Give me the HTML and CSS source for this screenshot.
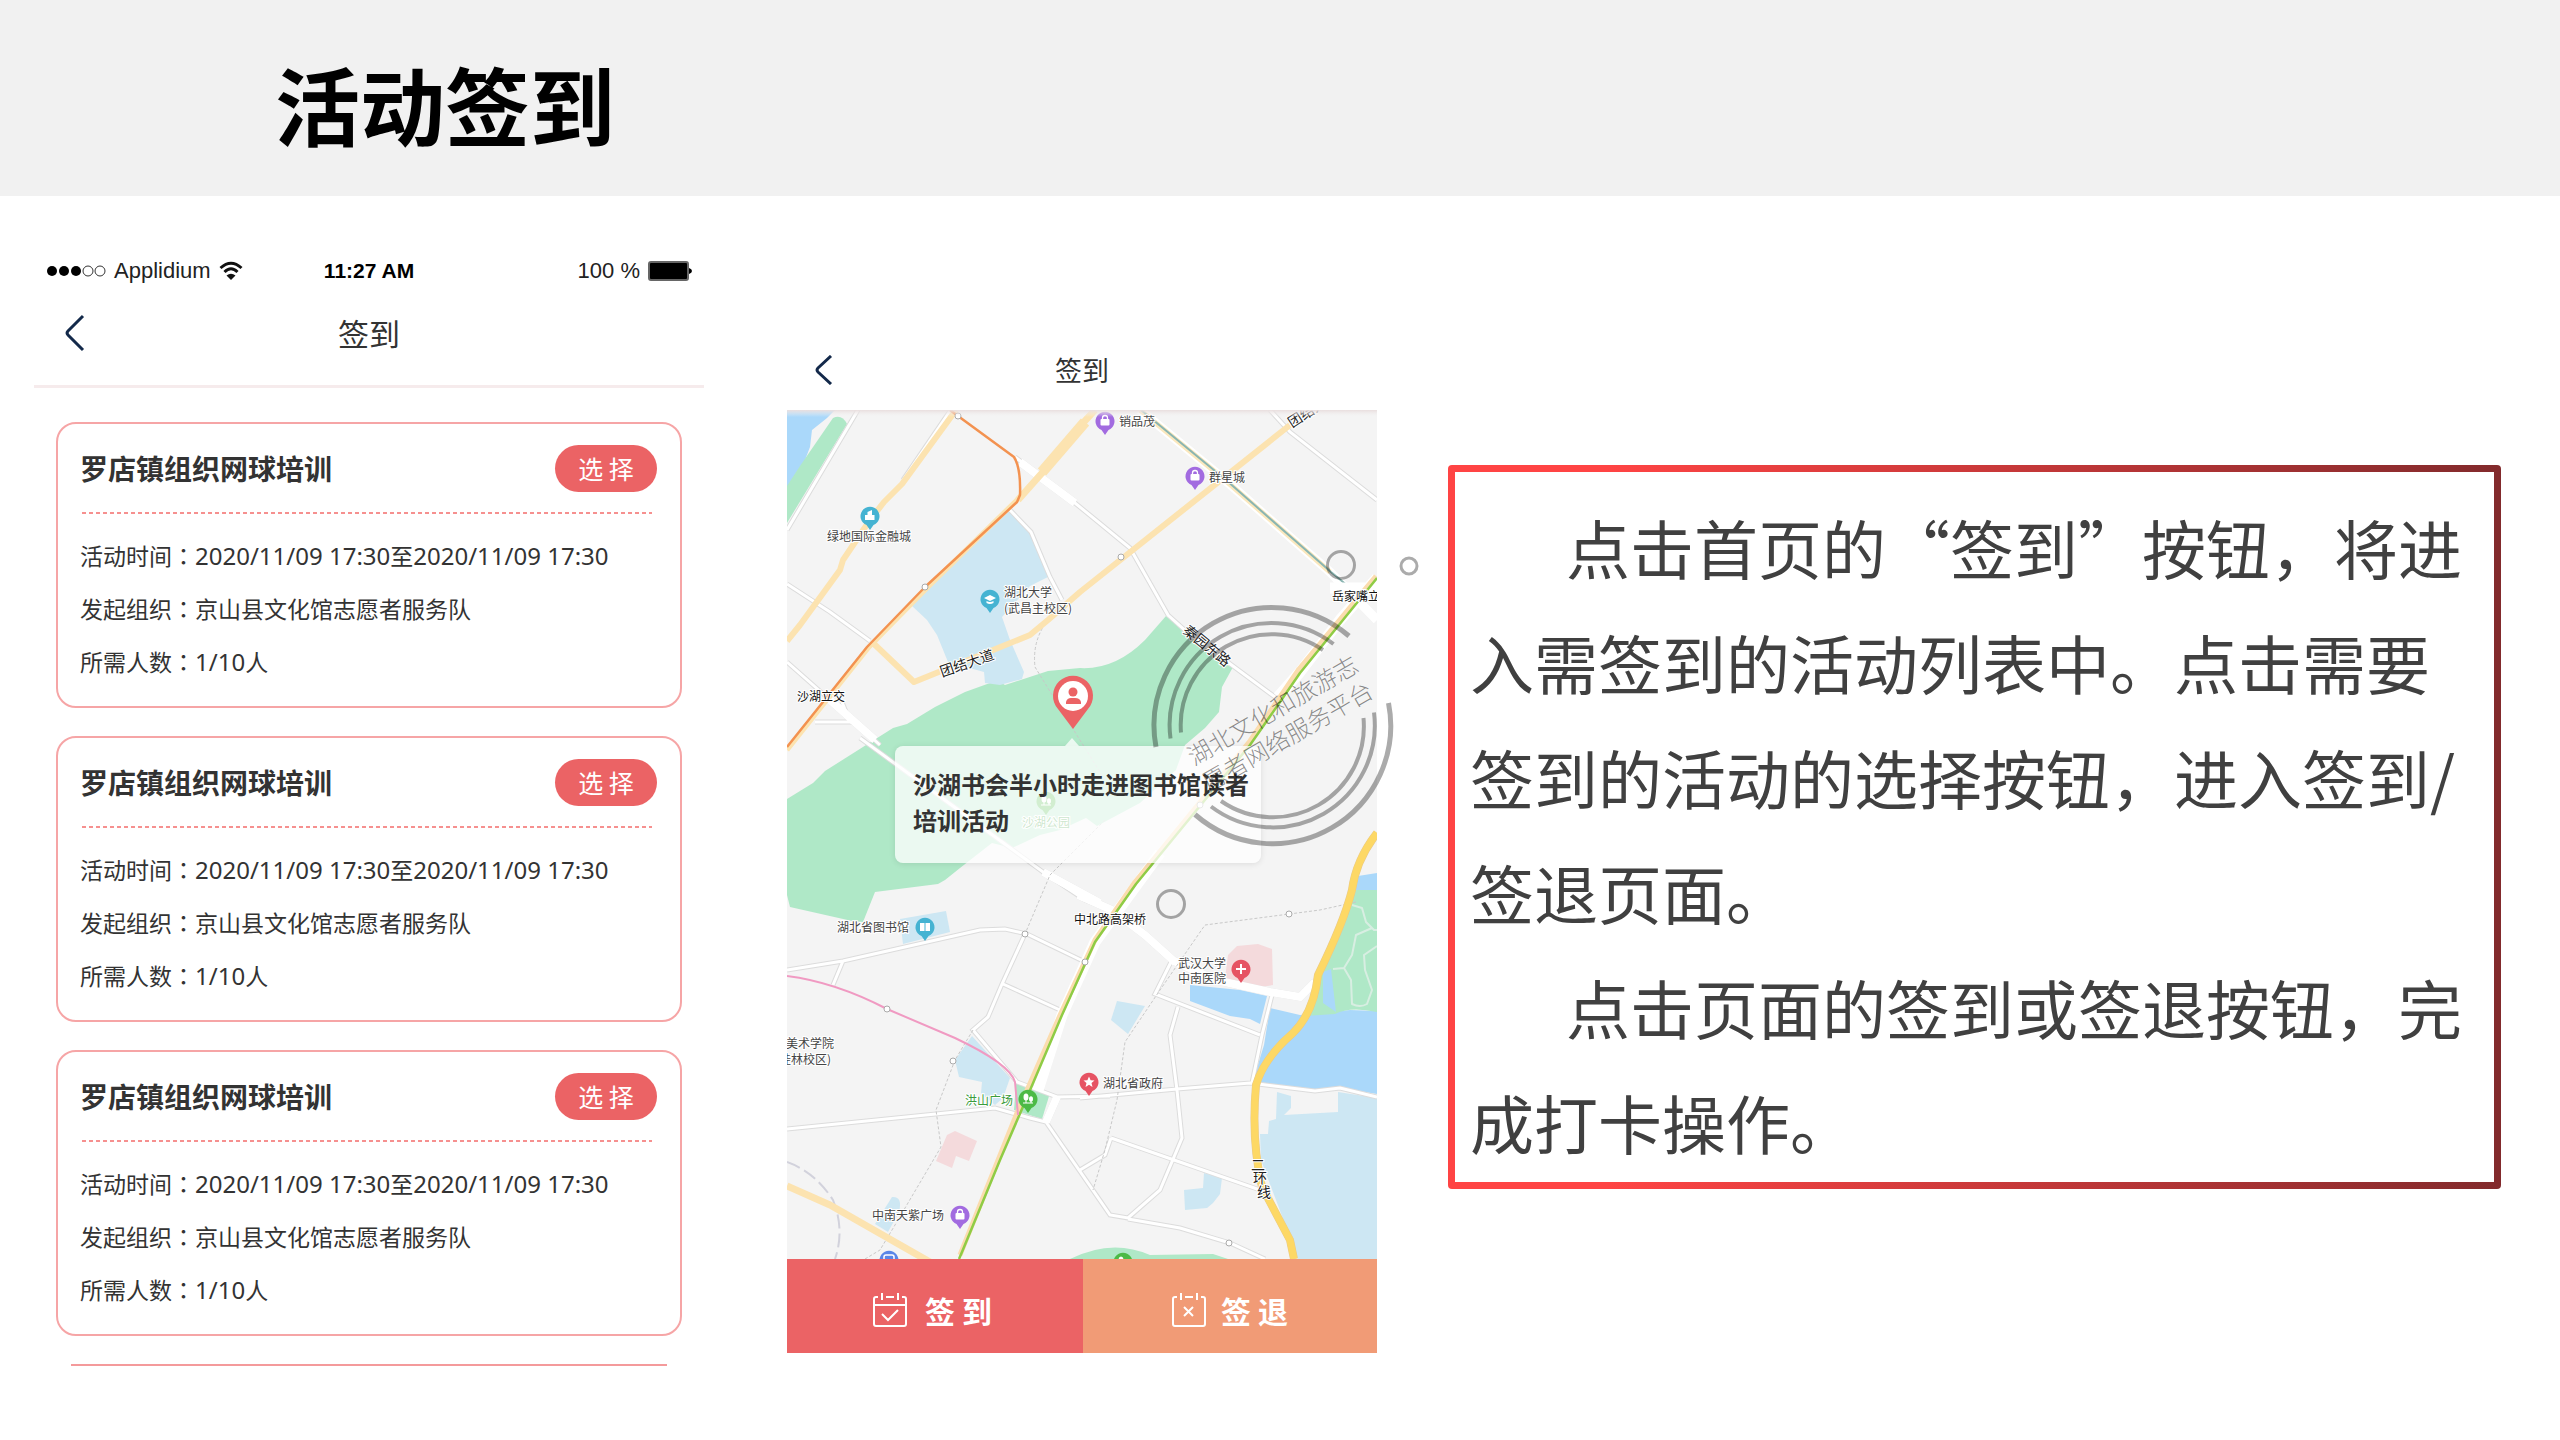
FILE: index.html
```html
<!DOCTYPE html>
<html lang="zh-CN">
<head>
	<meta charset="UTF-8">
	<title>活动签到</title>
	<link rel="stylesheet" href="styles.css">
</head>
<body>
	<header class="page-header">
		<h1>活动签到</h1>
	</header>
	<main class="content">
		<section class="phone-list">
			<div class="status-bar">
				<div class="carrier">
					<svg width="60" height="14" viewBox="0 0 60 14">
						<circle cx="6" cy="7" r="5"/><circle cx="18" cy="7" r="5"/><circle cx="30" cy="7" r="5"/>
						<g fill="none" stroke="#333"><circle cx="42" cy="7" r="5"/><circle cx="54" cy="7" r="5"/></g>
					</svg>
					<span>Applidium</span>
					<svg width="24" height="20" viewBox="0 0 24 20" fill="none" stroke="#111" stroke-width="3">
						<path d="M1.500 7 Q12 -2.500 22.500 7"/><path d="M5.500 11 Q12 4.500 18.500 11"/>
						<path d="M12 19 L7.500 14.500 Q12 11 16.500 14.500 Z" fill="#111" stroke="none"/>
					</svg>
				</div>
				<div class="time">11:27 AM</div>
				<div class="battery">
					<span>100 %</span>
					<svg width="44" height="20" viewBox="0 0 44 20">
						<rect x="1" y="1" width="39" height="18" rx="2" fill="#000" stroke="#666" stroke-width="2"/>
						<path d="M41 7 Q44 8 44 10 Q44 12 41 13 Z"/>
					</svg>
				</div>
			</div>
			<div class="nav-bar">
				<button type="button" class="back" aria-label="返回">
					<svg width="20" height="38" viewBox="0 0 20 38"><path d="M18 2 L3 17 Q1 19 3 21 L18 36"/></svg>
				</button>
				<h2>签到</h2>
			</div>
			<div class="list">
				<article class="card">
					<div class="card-head">
						<h3>罗店镇组织网球培训</h3>
						<button type="button" class="select">选 择</button>
					</div>
					<div class="card-info">
						<p>活动时间<span class="colon" lang="zh-TW">：</span><span class="num">2020/11/09 17:30</span>至<span class="num">2020/11/09 17:30</span></p>
						<p>发起组织<span class="colon" lang="zh-TW">：</span>京山县文化馆志愿者服务队</p>
						<p>所需人数<span class="colon" lang="zh-TW">：</span><span class="num">1/10</span>人</p>
					</div>
				</article>
				<article class="card">
					<div class="card-head">
						<h3>罗店镇组织网球培训</h3>
						<button type="button" class="select">选 择</button>
					</div>
					<div class="card-info">
						<p>活动时间<span class="colon" lang="zh-TW">：</span><span class="num">2020/11/09 17:30</span>至<span class="num">2020/11/09 17:30</span></p>
						<p>发起组织<span class="colon" lang="zh-TW">：</span>京山县文化馆志愿者服务队</p>
						<p>所需人数<span class="colon" lang="zh-TW">：</span><span class="num">1/10</span>人</p>
					</div>
				</article>
				<article class="card">
					<div class="card-head">
						<h3>罗店镇组织网球培训</h3>
						<button type="button" class="select">选 择</button>
					</div>
					<div class="card-info">
						<p>活动时间<span class="colon" lang="zh-TW">：</span><span class="num">2020/11/09 17:30</span>至<span class="num">2020/11/09 17:30</span></p>
						<p>发起组织<span class="colon" lang="zh-TW">：</span>京山县文化馆志愿者服务队</p>
						<p>所需人数<span class="colon" lang="zh-TW">：</span><span class="num">1/10</span>人</p>
					</div>
				</article>
				<div class="card-peek"></div>
			</div>
		</section>

		<section class="phone-map">
			<div class="nav-bar small">
				<button type="button" class="back" aria-label="返回">
					<svg width="18" height="30" viewBox="0 0 18 30"><path d="M16 1 L3 13 Q1 15 3 17 L16 29"/></svg>
				</button>
				<h2>签到</h2>
			</div>
			<div class="map">
				<svg class="map-canvas" viewBox="787 410 590 849">
					<defs>
						<path id="pin" d="M0 14 L-3.500 9 A9.500 9.500 0 1 1 3.500 9 Z"/>
						<g id="bag" fill="#fff"><rect x="-4.500" y="-2" width="9" height="6.500" rx="1"/><path d="M-2.500 -2 V-3 A2.500 2.500 0 0 1 2.500 -3 V-2" fill="none" stroke="#fff" stroke-width="1.300"/></g>
						<g id="trees" fill="#fff"><ellipse cx="-2" cy="-2" rx="2.500" ry="3.500"/><ellipse cx="3" cy="0" rx="2" ry="2.800"/><path d="M-2.500 0h1v4h-1zM2.500 1h1v3h-1zM-5 3.500h10v1h-10z"/></g>
						<linearGradient id="topShade" x1="0" y1="0" x2="0" y2="1"><stop offset="0" stop-color="#e9dede"/><stop offset="1" stop-color="#f4f4f4" stop-opacity="0"/></linearGradient>
					</defs>
					<rect x="787" y="410" width="590" height="849" fill="#f4f4f4"/>
					<!-- lakes -->
					<g fill="#aad8fa">
						<path d="M787 410 H835 L827 418 812 430 810 447 805 460 796 473 787 488 Z"/>
						<path d="M1190 985 L1240 990 1267 996 1260 1024 1250 1019 1230 1016 1190 1001 Z"/>
						<path d="M1270 1008 L1300 1015 1330 1012 1350 1010 1377 1011 V1094 L1340 1088 1315 1091 1253 1081 1264 1045 Z"/>
						<path d="M1358 876 L1377 873 V890 H1353 Z"/>
					</g>
					<!-- parks -->
					<g fill="#afe8c7">
						<path d="M833 418 Q842 414 847 424 L787 523 V486 L800 466 Z"/>
						<path d="M787 799 L813 783 825 771 893 728 907 724 935 707 965 692 990 683 1000 682 1005 685 1048 671 1080 668 Q1115 670 1145 640 L1166 616 1233 667 1222 687 1219 712 1205 728 1185 745 1176 770 1140 803 1097 826 1086 818 1060 830 1040 835 1012 848 992 843 960 868 945 880 938 884 875 892 863 922 852 921 790 907 787 895 Z"/>
						<path d="M1352 890 H1377 V1012 Q1350 1006 1335 1014 L1305 1016 1320 970 Z"/>
						<path d="M1016 1083 L1050 1093 1042 1119 1014 1110 Z"/>
						<path d="M1070 1259 Q1112 1238 1150 1255 L1213 1254 1228 1259 Z"/>
					</g>
					<path d="M1323 972 L1331 969 1336 1012 1323 1003 Z" fill="#aad8fa"/>
					<!-- campuses -->
					<g fill="#cde7f3">
						<path d="M1008 510 L1031 535 1048 577 1030 586 1002 617 1010 640 1024 672 1022 679 1000 685 985 683 984 672 948 662 937 635 927 620 911 605 Z"/>
						<path d="M972 1036 L1010 1078 1003 1098 995 1105 981 1093 982 1082 959 1077 955 1060 Z"/>
						<path d="M900 919 L946 911 950 932 903 944 Z"/>
						<path d="M892 1197 Q903 1196 899 1212 L888 1232 875 1224 Z"/>
						<path d="M1117 1001 L1145 1006 1128 1034 1111 1020 Z"/>
						<path d="M1204 1173 L1222 1178 1220 1194 1213 1203 1207 1208 1185 1210 1184 1190 1203 1188 Z"/>
						<path d="M1277 1092 L1291 1096 V1108 L1284 1115 1338 1112 V1092 L1377 1098 V1259 H1298 L1261 1160 1260 1134 1268 1134 1269 1121 1276 1119 Z"/>
					</g>
					<g fill="#f4dadc">
						<path d="M1228 955 L1237 946 1258 944 1272 949 1273 985 1255 988 1225 978 Z"/>
						<path d="M947 1135 L955 1131 977 1141 969 1161 956 1156 952 1168 936 1161 Z"/>
					</g>
					<!-- minor roads: grey casing, white fill -->
					<g class="casing">
						<path id="minor" d="M858 410 L787 530 M950 411 L903 480 M787 584 L830 612 870 641 M787 662 L830 700 850 718 880 745 M1015 457 L1035 472 1075 503 1130 548 1168 615 1187 632 1275 697 M1009 509 L1031 532 1050 577 1062 600 M1270 410 L1290 432 1377 500 M860 738 L1043 872 1085 900 1110 910 M787 970 L843 961 980 930 1005 929 1027 934 1085 962 M843 961 L833 985 M1025 934 L1002 984 988 1017 973 1030 1017 1082 1057 1097 1110 1096 M1003 984 L1060 1010 M787 1129 L995 1108 1030 1118 1046 1122 1110 1215 1128 1218 1160 1190 1182 1138 1177 1090 1170 1035 1178 1007 M1172 960 L1155 994 1260 1035 M1080 1098 L1177 1089 1250 1083 1315 1091 1340 1088 1377 1097 M1272 995 L1262 1035 1252 1083 M1111 1138 L1260 1190 M1111 1138 L1105 1155 1080 1170 M1128 1219 L1180 1228 1230 1243 1265 1259 M815 722 H850 L842 702"/>
						<path id="wide" d="M1020 462 L1075 503 M830 700 L875 740 M1043 872 L1100 903 M1078 895 L1112 910 1145 935 1175 962 M1172 960 L1215 980 1270 992 1300 997 1315 982 M1057 1097 L1046 1122"/>
					</g>
					<use href="#minor" class="road-white"/>
					<use href="#wide" class="road-white wide"/>
					<g fill="none" stroke="#d8eee2" stroke-width="2" stroke-linejoin="round">
						<path d="M1352 905 L1362 908 1366 922 1374 930 1377 930 M1372 928 L1356 935 1352 955 1344 968 1333 969 M1344 968 L1351 980 1352 1004 Q1360 1008 1367 1004 L1372 990 1365 970 1364 955 1377 946"/>
					</g>
					<g fill="none" stroke="#c8c8c8" stroke-width="1" stroke-dasharray="3 2">
						<path d="M1048 620 Q1032 640 1035 667 L1073 729 1105 780 M1105 820 L1050 875 1025 934"/>
						<path d="M973 1030 L955 1060 936 1110 941 1147 895 1225 880 1250 865 1259"/>
						<path d="M1356 902 L1320 910 1205 925 1160 990 1125 1042 1117 1100 1105 1150 1093 1190"/>
					</g>
					<path d="M787 1162 Q815 1172 833 1200 Q845 1230 835 1259" fill="none" stroke="#d2d2dc" stroke-width="2" stroke-dasharray="14 5"/>
					<!-- main roads -->
					<g fill="none" stroke="#fce3b0" stroke-linejoin="round">
						<path stroke-width="6" d="M956 410 L902 484 884 502 870 520 843 560 840 570 800 625 787 641"/>
						<path stroke-width="7" d="M1095 410 L1072 435 1042 473 1018 500"/>
						<path stroke-width="11" d="M1085 422 L1042 472"/>
						<path stroke-width="5" d="M1020 497 L926 589 869 647 787 750"/>
						<path stroke-width="6" d="M1290 425 L1080 592 1048 620 1030 635 998 648 914 682 872 642"/>
						<path stroke-width="7" d="M787 1186 L830 1205 930 1262"/>
					</g>
					<g fill="none" stroke-linejoin="round">
						<path stroke="#fff" stroke-width="9" d="M1140 410 L1225 480 1330 572 1377 620"/>
						<path stroke="#fbe8bd" stroke-width="5" d="M1140 410 L1225 480 1330 572"/>
						<path stroke="#8ab5b1" stroke-width="2" d="M1141 410 L1226 480 1331 572 1355 592"/>
						<path stroke="#fff" stroke-width="11" d="M1377 578 L1340 620 1300 672 1278 697 M1330 588 L1377 588 M1160 853 L1095 942 1062 1015 1038 1090"/>
						<path stroke="#fbdcae" stroke-width="5" d="M1376 576 L1299 669 1250 741 1135 882 1095 940 1061 1013 1017 1113 960 1255"/>
						<path stroke="#8fcc45" stroke-width="2.500" d="M1377 578 L1300 673 1280 702 1250 745 1136 884 1095 942 1062 1015 1025 1102 1000 1160 962 1252 959 1259"/>
						<path stroke="#f09ac2" stroke-width="2" d="M787 976 Q835 982 887 1009 L955 1038 Q1010 1064 1015 1082 L1018 1115"/>
						<path stroke="#f39250" stroke-width="2.500" d="M950 410 L958 416 1014 457 Q1021 468 1020 495 L1017 502 925 587 867 647 787 747"/>
						<path stroke="#e8c98a" stroke-width="8" d="M1377 833 Q1356 860 1352 890 Q1344 922 1318 975 Q1314 1012 1293 1033 Q1264 1058 1256 1085 Q1251 1140 1262 1187 L1290 1240 1294 1259"/>
						<path stroke="#fdd865" stroke-width="7" d="M1377 833 Q1356 860 1352 890 Q1344 922 1318 975 Q1314 1012 1293 1033 Q1264 1058 1256 1085 Q1251 1140 1262 1187 L1290 1240 1294 1259"/>
					</g>
					<g fill="#fff" stroke="#aaa" stroke-width="1">
						<circle cx="958" cy="416" r="3"/><circle cx="925" cy="587" r="3"/><circle cx="1121" cy="557" r="3"/>
						<circle cx="1025" cy="934" r="3"/><circle cx="1085" cy="962" r="3"/><circle cx="887" cy="1009" r="3"/>
						<circle cx="953" cy="1061" r="3"/><circle cx="1289" cy="914" r="3"/><circle cx="1229" cy="1243" r="3"/><circle cx="1200" cy="805" r="3"/>
					</g>
					<!-- place pins -->
					<g fill="#45b3d2">
						<g transform="translate(870 516)"><use href="#pin"/><path d="M-5 4V-1h2.500V-4L2 -6V-1H4.500V4Z" fill="#fff"/></g>
						<g transform="translate(990 599)"><use href="#pin"/><path d="M-6 -1L0 -4 6 -1 0 2ZM-3.500 2Q0 4 3.500 2V4Q0 6 -3.500 4Z" fill="#fff"/></g>
						<g transform="translate(925 927)"><use href="#pin"/><path d="M-5 -4H-.5V4H-5ZM.5 -4H5V4H.5Z" fill="#fff"/></g>
					</g>
					<g fill="#a26be0">
						<g transform="translate(1105 421)"><use href="#pin"/><use href="#bag"/></g>
						<g transform="translate(1195 476)"><use href="#pin"/><use href="#bag"/></g>
						<g transform="translate(960 1215)"><use href="#pin"/><use href="#bag"/></g>
					</g>
					<g fill="#e65363">
						<g transform="translate(1241 969)"><use href="#pin"/><path d="M-5 0H5M0 -5V5" stroke="#fff" stroke-width="2"/></g>
						<g transform="translate(1089 1082)"><use href="#pin"/><path d="M0 -5.500L1.600 -1.800 5.500 -1.600 2.500 1 3.500 5 0 2.800 -3.500 5 -2.500 1 -5.500 -1.600 -1.600 -1.800Z" fill="#fff"/></g>
					</g>
					<g fill="#4cba46">
						<g transform="translate(1046 801)"><use href="#pin"/><use href="#trees"/></g>
						<g transform="translate(1028 1099)"><use href="#pin"/><use href="#trees"/></g>
						<g transform="translate(1123 1262)"><use href="#pin"/><use href="#trees"/></g>
					</g>
					<g transform="translate(889 1260)"><use href="#pin" fill="#5a86e8"/><rect x="-5" y="-5" width="10" height="8" rx="2" fill="none" stroke="#fff" stroke-width="1.500"/></g>
					<g class="labels">
						<text x="827" y="541">绿地国际金融城</text>
						<text x="1004" y="597">湖北大学</text>
						<text x="1004" y="613">(武昌主校区)</text>
						<text x="1119" y="426">销品茂</text>
						<text x="1209" y="482">群星城</text>
						<text x="1332" y="601" class="strong">岳家嘴立交</text>
						<text x="797" y="701" class="strong">沙湖立交</text>
						<text x="837" y="932">湖北省图书馆</text>
						<text x="1074" y="924" class="strong">中北路高架桥</text>
						<text x="1178" y="968">武汉大学</text>
						<text x="1178" y="983">中南医院</text>
						<text x="1103" y="1088">湖北省政府</text>
						<text x="834" y="1048" text-anchor="end">美术学院</text>
						<text x="831" y="1064" text-anchor="end">(桂林校区)</text>
						<text x="872" y="1220">中南天紫广场</text>
						<text x="965" y="1105" class="green">洪山广场</text>
						<text x="1022" y="827" class="green">沙湖公园</text>
						<text class="road-name" transform="translate(1292 428) rotate(-33)">团结大道</text>
						<text class="road-name" transform="translate(942 677) rotate(-19)">团结大道</text>
						<text class="road-name" transform="translate(1182 632) rotate(39)">秦园东路</text>
						<text class="road-name" x="1251" y="1170">二</text>
						<text class="road-name" x="1253" y="1183">环</text>
						<text class="road-name" x="1257" y="1197">线</text>
					</g>
					<rect x="787" y="410" width="590" height="7" fill="url(#topShade)"/>
					<!-- event marker -->
					<path d="M1073 729 L1058 709 A20 20 0 1 1 1088 709 Z" fill="#eb6365"/>
					<circle cx="1073" cy="696" r="15" fill="#fff"/>
					<circle cx="1073" cy="692" r="4.500" fill="#eb6365"/>
					<path d="M1066 704 V702 Q1067 698 1071 698 H1075 Q1080 698 1081 702 V704 Z" fill="#eb6365"/>
				</svg>
				<div class="callout">沙湖书会半小时走进图书馆读者培训活动</div>
				<svg class="watermark" viewBox="787 410 590 849">
					<g fill="none" stroke="#000" stroke-opacity=".33">
						<g stroke-width="5">
							<path d="M1156 747 A118 118 0 0 1 1349 636"/>
							<path d="M1388.500 703 A118 118 0 0 1 1195 814.500"/>
						</g>
						<g stroke-width="4">
							<path d="M1170.500 738.500 A102 102 0 0 1 1333.500 644"/>
							<path d="M1181 732.500 A91 91 0 0 1 1323 650"/>
							<path d="M1374 712.500 A102 102 0 0 1 1211 806.500"/>
							<path d="M1363.500 718 A91 91 0 0 1 1221 801"/>
						</g>
						<g stroke-width="3">
							<circle cx="1341" cy="565" r="13.500"/><circle cx="1409" cy="566" r="8"/><circle cx="1171" cy="904" r="13.500"/>
						</g>
					</g>
					<text transform="translate(1194 766) rotate(-30)">湖北文化和旅游志</text>
					<text transform="translate(1209 792) rotate(-30)">愿者网络服务平台</text>
				</svg>
			</div>
			<div class="actions">
				<button type="button" class="sign-in">
					<svg width="34" height="34" viewBox="0 0 34 34"><path d="M5 4 H3 Q1 4 1 6 V31 Q1 33 3 33 H31 Q33 33 33 31 V6 Q33 4 31 4 H29 M13 4 H21 M9 0 V7 M25 0 V7 M1 12 H33 M9 21 L15 27 25 17"/></svg>
					<span>签 到</span>
				</button>
				<button type="button" class="sign-out">
					<svg width="34" height="34" viewBox="0 0 34 34"><path d="M5 4 H3 Q1 4 1 6 V31 Q1 33 3 33 H31 Q33 33 33 31 V6 Q33 4 31 4 H29 M13 4 H21 M9 0 V7 M25 0 V7 M12 14 L21 23 M21 14 L12 23"/></svg>
					<span>签 退</span>
				</button>
			</div>
		</section>

		<section class="note">
			<p>点击首页的“签到”按钮，将进入需签到的活动列表中。点击需要签到的活动的选择按钮，进入签到/签退页面。</p>
			<p>点击页面的签到或签退按钮，完成打卡操作。</p>
		</section>
	</main>
</body>
</html>
```
FILE: styles.css
```css
* {
	box-sizing: border-box;
}
body {
	margin: 0;
	background: #fff;
	color: #333;
	font-family: "Noto Sans CJK SC", sans-serif;
}
h1, h2, h3, p {
	margin: 0;
}
button {
	font-family: inherit;
	border: none;
	padding: 0;
	cursor: pointer;
}
svg {
	display: block;
}
.page-header {
	background: #f1f1f1;
	height: 196px;
	display: flex;
	align-items: center;
	padding: 10px 275px 0;
}
.page-header h1 {
	font-size: 85px;
	line-height: 100px;
	color: #000;
}
.content {
	display: grid;
	grid-template-columns: 670fr 602fr 1053fr;
	column-gap: 71px;
	align-items: start;
	padding: 0 59px 0 34px;
}

/* activity list */
.phone-list {
	padding-top: 62px;
}
.status-bar {
	display: grid;
	grid-template-columns: 1fr auto 1fr;
	align-items: center;
	height: 26px;
	padding: 0 12px;
	font-family: "Liberation Sans", sans-serif;
	font-size: 22px;
	color: #222;
}
.carrier, .battery {
	display: flex;
	align-items: center;
	gap: 8px;
}
.battery {
	justify-content: flex-end;
}
.time {
	font-size: 21px;
	font-weight: bold;
	color: #000;
}
.nav-bar {
	height: 104px;
	display: flex;
	align-items: center;
	justify-content: center;
	position: relative;
	padding-bottom: 4px;
	border-bottom: 3px solid #f6ebec;
}
.nav-bar h2 {
	font-size: 31px;
	line-height: 40px;
	font-weight: normal;
}
.back {
	position: absolute;
	left: 31px;
	background: none;
}
.back path {
	fill: none;
	stroke: #13294a;
	stroke-width: 3;
}
.list {
	display: flex;
	flex-direction: column;
	gap: 28px;
	padding: 34px 22px 0;
}
.card {
	border: 2px solid #f6a5a6;
	border-radius: 20px;
	padding: 0 23px 18px 22px;
}
.card-head {
	display: flex;
	align-items: center;
	justify-content: space-between;
	height: 90px;
	padding-bottom: 2px;
	background: repeating-linear-gradient(90deg, #f6908f 0 4px, #fff 4px 7px) 2px 100% / 570px 2px no-repeat;
}
.card-head h3 {
	font-size: 28px;
	line-height: 40px;
}
.select {
	width: 102px;
	height: 47px;
	border-radius: 24px;
	background: #eb6365;
	color: #fff;
	font-size: 25px;
}
.card-info {
	padding-top: 15px;
	font-size: 23px;
	line-height: 53px;
}
.card-info p {
	height: 53px;
	white-space: nowrap;
}
.colon {
	font-family: "Noto Sans CJK TC", sans-serif;
}
.num {
	font-family: "Noto Sans", sans-serif;
	font-size: 24px;
}
.card-peek {
	height: 2px;
	margin: 0 15px;
	background: #f49a9b;
}

/* map screen */
.phone-map {
	padding: 134px 0 0 12px;
}
.nav-bar.small {
	height: 80px;
	padding-bottom: 0;
	border-bottom: none;
}
.nav-bar.small h2 {
	font-size: 27px;
}
.nav-bar.small .back {
	left: 28px;
}
.map {
	position: relative;
}
.map-canvas {
	width: 100%;
}
.casing {
	fill: none;
	stroke: #dcdcdc;
	stroke-width: 5;
}
.casing #wide {
	stroke-width: 8;
}
.road-white {
	fill: none;
	stroke: #fff;
}
use.road-white {
	stroke-width: 3;
}
.labels text {
	font-size: 12px;
	fill: #444;
	stroke: #fff;
	stroke-width: 2px;
	paint-order: stroke;
}
.labels .strong {
	fill: #111;
}
.labels .green {
	fill: #3a9c3c;
}
.labels .road-name {
	font-size: 14px;
	fill: #222;
}
.callout {
	position: absolute;
	left: 18.3%;
	top: 39.6%;
	width: 62%;
	padding: 20px 10px 25px 18px;
	border-radius: 8px;
	background: rgba(255, 255, 255, 0.75);
	box-shadow: 0 1px 6px rgba(0, 0, 0, 0.1);
	font-size: 24px;
	line-height: 36px;
	font-weight: bold;
}
.callout::before {
	content: "";
	position: absolute;
	left: 170px;
	bottom: 100%;
	border: 7px solid transparent;
	border-top-width: 0;
	border-bottom: 8px solid rgba(255, 255, 255, 0.75);
}
.watermark {
	position: absolute;
	left: 0;
	top: 0;
	width: 100%;
	overflow: visible;
	pointer-events: none;
}
.watermark text {
	font-size: 24px;
	font-weight: 300;
	fill: #000;
	fill-opacity: 0.45;
}
.actions {
	display: grid;
	grid-template-columns: 296fr 294fr;
}
.actions button {
	height: 94px;
	display: flex;
	align-items: center;
	justify-content: center;
	padding-top: 8px;
	color: #fff;
	font-size: 30px;
	font-weight: bold;
}
.actions path {
	fill: none;
	stroke: #fff;
	stroke-width: 2;
}
.actions .sign-in {
	gap: 18px;
	padding-right: 5px;
	background: #eb6365;
}
.actions .sign-out {
	gap: 15px;
	background: #f19b76;
}

/* explanation box */
.note {
	margin-top: 269px;
	padding: 17px 24px 3px 15px;
	border: 7px solid transparent;
	border-radius: 4px;
	background: linear-gradient(#fff, #fff) padding-box, linear-gradient(90deg, #ff4444 15%, #822a2c) border-box;
	color: #404040;
	font-size: 64px;
	line-height: 115px;
}
.note p {
	text-indent: 96px;
}
```
